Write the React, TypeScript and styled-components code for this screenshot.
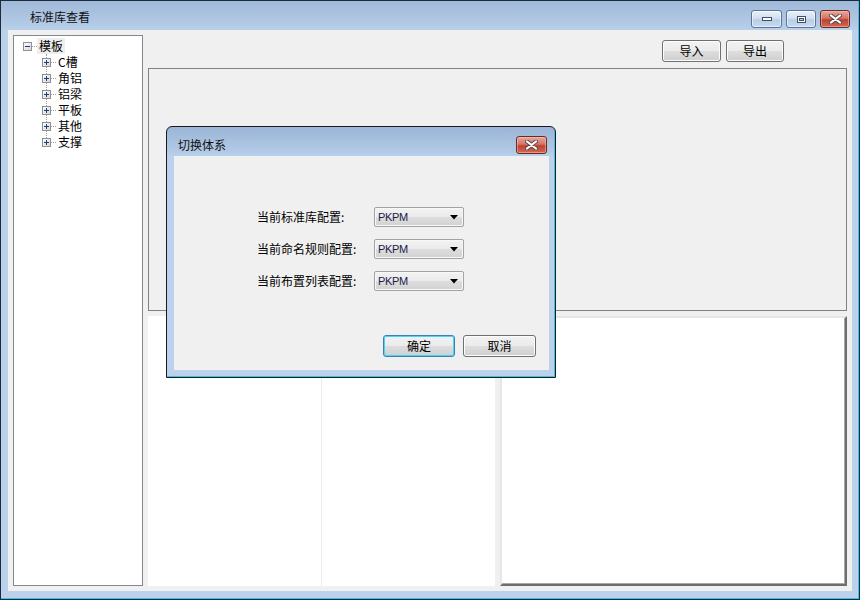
import React from 'react';
import styled, { createGlobalStyle, css } from 'styled-components';

const GlobalStyle = createGlobalStyle`
  html, body {
    margin: 0;
    padding: 0;
    background: #ffffff;
  }
  body {
    font-family: "Noto Sans CJK SC", "Liberation Sans", sans-serif;
    font-size: 12px;
    color: #000;
  }
  * {
    box-sizing: border-box;
  }
`;

const Window = styled.div`
  position: relative;
  width: 860px;
  height: 600px;
  display: flex;
  flex-direction: column;
  border: 1px solid #1e2a3a;
  box-shadow: inset -1px -1px 0 #34c6ea;
  background: linear-gradient(180deg, #9fb9d9 0px, #b4cbe6 24px, #bad2ec 30px, #bad2ec 100%);
`;

const TitleBar = styled.div`
  height: 29px;
  display: flex;
  align-items: center;
  padding: 0 9px 0 29px;
`;

const Caption = styled.div`
  flex: 1;
  line-height: 16px;
  padding-top: 2px;
  color: #111;
`;

const CaptionButtons = styled.div`
  display: flex;
  gap: 4px;
  align-self: flex-start;
  margin-top: 9px;
`;

const CaptionButton = styled.div<{ $close?: boolean; $w: number }>`
  width: ${(p) => p.$w}px;
  height: 18px;
  border: 1px solid #5d7595;
  border-radius: 3px;
  display: flex;
  align-items: center;
  justify-content: center;
  box-shadow: inset 0 0 0 1px rgba(255, 255, 255, 0.55);
  background: linear-gradient(180deg, #e8f0fa 0%, #d3e0f0 45%, #b8cde7 55%, #c8daef 100%);
  ${(p) =>
    p.$close &&
    css`
      border-color: #6b2b22;
      box-shadow: inset 0 0 0 1px rgba(255, 200, 190, 0.5);
      background: linear-gradient(180deg, #e6a79c 0%, #d57566 45%, #c0412f 55%, #cf6a58 100%);
    `}
`;

const Client = styled.div`
  flex: 1;
  margin: 0 7px 8px 7px;
  background: #f0f0f0;
  display: flex;
  gap: 5px;
  padding: 5px;
`;

const TreePanel = styled.div`
  width: 130px;
  background: #fff;
  border: 1px solid #828790;
  padding-top: 2px;
`;

const TreeRow = styled.div<{ $indent: number }>`
  height: 16px;
  display: flex;
  align-items: center;
  padding-left: ${(p) => p.$indent}px;
`;

const Connector = styled.span`
  width: 5px;
  border-top: 1px dotted #a0a0a0;
`;

const TreeLabel = styled.span<{ $selected?: boolean }>`
  padding: 0 2px 0 2px;
  line-height: 16px;
  background: ${(p) => (p.$selected ? '#eeeeee' : 'transparent')};
`;

const ChildList = styled.div`
  position: relative;
  &::before {
    content: '';
    position: absolute;
    left: 32px;
    top: 0;
    height: 88px;
    border-left: 1px dotted #a0a0a0;
  }
`;

const BoxSvg = styled.svg`
  position: relative;
  display: block;
  flex: none;
`;

const RightColumn = styled.div`
  flex: 1;
  display: flex;
  flex-direction: column;
`;

const Toolbar = styled.div`
  height: 33px;
  display: flex;
  justify-content: flex-end;
  align-items: flex-start;
  gap: 5px;
  padding: 5px 63px 0 0;
`;

const PushButton = styled.div<{ $w: number; $default?: boolean }>`
  width: ${(p) => p.$w}px;
  height: 22px;
  border: 1px solid #707070;
  border-radius: 3px;
  display: flex;
  align-items: center;
  justify-content: center;
  line-height: 16px;
  box-shadow: inset 0 0 0 1px #fcfcfc;
  background: linear-gradient(180deg, #f2f2f2 0%, #ebebeb 48%, #dddddd 52%, #cfcfcf 100%);
  ${(p) =>
    p.$default &&
    css`
      border-color: #3c7fb1;
      box-shadow: inset 0 0 0 1px #48d6f8;
    `}
`;

const TopPanel = styled.div`
  height: 243px;
  border: 1px solid #828282;
  background: #f0f0f0;
`;

const BottomRow = styled.div`
  flex: 1;
  display: flex;
  gap: 5px;
  margin-top: 5px;
`;

const ListArea = styled.div`
  width: 347px;
  background: #fff;
  display: flex;
`;

const ListColumn = styled.div<{ $w?: number }>`
  width: ${(p) => (p.$w ? `${p.$w}px` : 'auto')};
  flex: ${(p) => (p.$w ? 'none' : 1)};
  border-right: ${(p) => (p.$w ? '1px solid #ececec' : 'none')};
`;

const SunkenPanel = styled.div`
  flex: 1;
  background: #fff;
  border-style: solid;
  border-width: 2px;
  border-color: #e6e6e6 #6e6e6e #6e6e6e #e6e6e6;
  box-shadow: inset -1px -1px 0 #a8a8a8;
`;

const Dialog = styled.div`
  position: absolute;
  left: 165px;
  top: 125px;
  width: 390px;
  height: 252px;
  border: 1px solid #1a1a1a;
  border-radius: 6px 6px 0 0;
  display: flex;
  flex-direction: column;
  box-shadow: inset -1px -1px 0 #38c4e8;
  background: linear-gradient(180deg, #9ab5d6 0px, #b2c9e5 24px, #bad2ec 30px, #bad2ec 100%);
`;

const DialogTitleBar = styled.div`
  height: 29px;
  display: flex;
  align-items: flex-start;
  padding: 0 8px 0 11px;
`;

const DialogCaption = styled.div`
  flex: 1;
  line-height: 16px;
  padding-top: 10px;
  color: #111;
`;

const DialogClose = styled(CaptionButton)`
  margin-top: 9px;
  height: 18px;
`;

const DialogBody = styled.div`
  flex: 1;
  margin: 0 6px 7px 7px;
  background: #f0f0f0;
  display: flex;
  flex-direction: column;
`;

const Form = styled.div`
  display: flex;
  flex-direction: column;
  gap: 12px;
  padding: 51px 0 0 83px;
`;

const FormRow = styled.div`
  display: flex;
  align-items: center;
  height: 20px;
`;

const FormLabel = styled.span`
  width: 117px;
  line-height: 16px;
`;

const Combo = styled.div`
  width: 90px;
  height: 20px;
  border: 1px solid #a3a3a3;
  border-radius: 2px;
  display: flex;
  align-items: center;
  padding: 0 5px 0 3px;
  box-shadow: inset 0 0 0 1px #f8f8f8;
  background: linear-gradient(180deg, #f2f2f2 0%, #ebebeb 48%, #dddddd 52%, #d2d2d2 100%);
`;

const ComboText = styled.span`
  flex: 1;
  font-family: "Liberation Sans", sans-serif;
  font-size: 11px;
  color: #1a1a4a;
  letter-spacing: -0.3px;
`;

const ButtonRow = styled.div`
  margin-top: auto;
  display: flex;
  justify-content: flex-end;
  gap: 8px;
  padding: 0 13px 13px 0;
`;

function ExpandBox({ open }: { open?: boolean }) {
  return (
    <BoxSvg width="9" height="9" viewBox="0 0 9 9">
      <defs>
        <linearGradient id="eb" x1="0" y1="0" x2="1" y2="1">
          <stop offset="0" stopColor="#ffffff" />
          <stop offset="1" stopColor="#d4d4d4" />
        </linearGradient>
      </defs>
      <rect x="0.5" y="0.5" width="8" height="8" fill="url(#eb)" stroke="#919191" />
      <line x1="2" y1="4.5" x2="7" y2="4.5" stroke="#1e3c78" />
      {!open && <line x1="4.5" y1="2" x2="4.5" y2="7" stroke="#1e3c78" />}
    </BoxSvg>
  );
}

function CloseGlyph() {
  return (
    <svg width="13" height="10" viewBox="0 0 13 10">
      <path d="M2 1.5 L11 8.5 M11 1.5 L2 8.5" stroke="#5a4a4a" strokeWidth="4" strokeLinecap="round" />
      <path d="M2 1.5 L11 8.5 M11 1.5 L2 8.5" stroke="#ffffff" strokeWidth="2.2" strokeLinecap="round" />
    </svg>
  );
}

function MinGlyph() {
  return (
    <svg width="12" height="6" viewBox="0 0 12 6">
      <rect x="1.5" y="1.5" width="9" height="3" fill="#fff" stroke="#3d4e66" />
    </svg>
  );
}

function RestoreGlyph() {
  return (
    <svg width="11" height="9" viewBox="0 0 11 9">
      <rect x="1.5" y="1.5" width="8" height="6" fill="none" stroke="#3d4e66" />
      <rect x="2.5" y="2.5" width="6" height="4" fill="none" stroke="#fff" />
      <rect x="3.5" y="3.5" width="4" height="2" fill="none" stroke="#3d4e66" />
    </svg>
  );
}

function ComboArrow() {
  return (
    <svg width="8" height="5" viewBox="0 0 8 5">
      <path d="M0 0 L8 0 L4 4.5 Z" fill="#000" />
    </svg>
  );
}

const children = ['C槽', '角铝', '铝梁', '平板', '其他', '支撑'];
const configRows = ['当前标准库配置:', '当前命名规则配置:', '当前布置列表配置:'];

export default function App() {
  return (
    <>
      <GlobalStyle />
      <Window>
        <TitleBar>
          <Caption>标准库查看</Caption>
          <CaptionButtons>
            <CaptionButton $w={31}>
              <MinGlyph />
            </CaptionButton>
            <CaptionButton $w={30}>
              <RestoreGlyph />
            </CaptionButton>
            <CaptionButton $w={30} $close>
              <CloseGlyph />
            </CaptionButton>
          </CaptionButtons>
        </TitleBar>
        <Client>
          <TreePanel>
            <TreeRow $indent={9}>
              <ExpandBox open />
              <Connector />
              <TreeLabel $selected>模板</TreeLabel>
            </TreeRow>
            <ChildList>
              {children.map((c) => (
                <TreeRow key={c} $indent={28}>
                  <ExpandBox />
                  <Connector />
                  <TreeLabel>{c}</TreeLabel>
                </TreeRow>
              ))}
            </ChildList>
          </TreePanel>
          <RightColumn>
            <Toolbar>
              <PushButton $w={59}>导入</PushButton>
              <PushButton $w={58}>导出</PushButton>
            </Toolbar>
            <TopPanel />
            <BottomRow>
              <ListArea>
                <ListColumn $w={174} />
                <ListColumn />
              </ListArea>
              <SunkenPanel />
            </BottomRow>
          </RightColumn>
        </Client>

        <Dialog>
          <DialogTitleBar>
            <DialogCaption>切换体系</DialogCaption>
            <DialogClose $w={31} $close>
              <CloseGlyph />
            </DialogClose>
          </DialogTitleBar>
          <DialogBody>
            <Form>
              {configRows.map((r) => (
                <FormRow key={r}>
                  <FormLabel>{r}</FormLabel>
                  <Combo>
                    <ComboText>PKPM</ComboText>
                    <ComboArrow />
                  </Combo>
                </FormRow>
              ))}
            </Form>
            <ButtonRow>
              <PushButton $w={72} $default>
                确定
              </PushButton>
              <PushButton $w={73}>取消</PushButton>
            </ButtonRow>
          </DialogBody>
        </Dialog>
      </Window>
    </>
  );
}
